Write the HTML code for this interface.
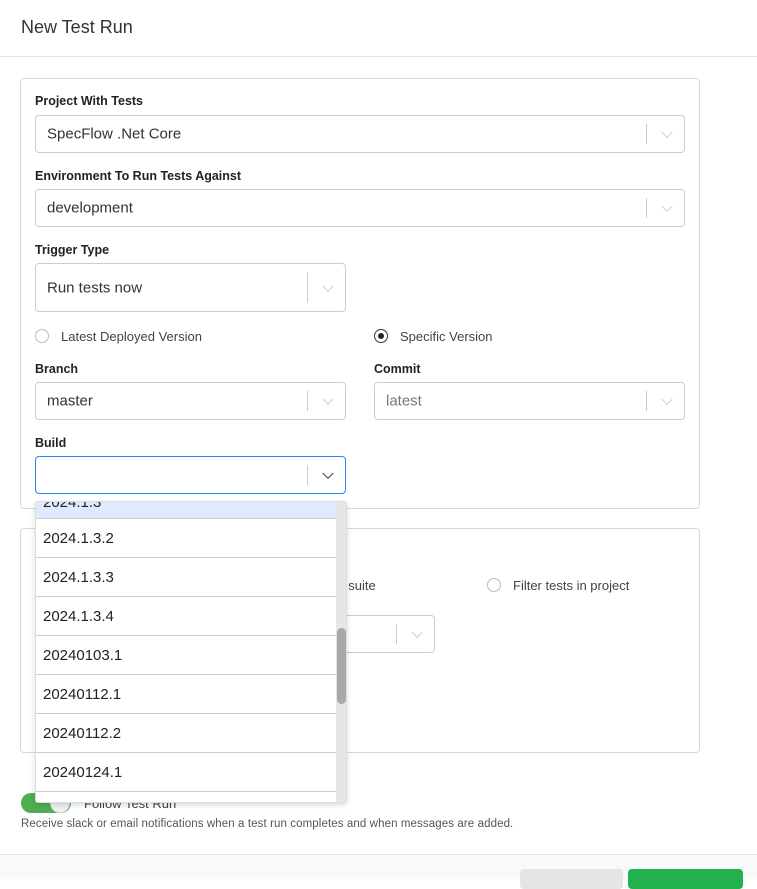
<!DOCTYPE html>
<html><head><style>
*{box-sizing:border-box;margin:0;padding:0}
body{width:757px;height:879px;overflow:hidden;background:#fff;font-family:"Liberation Sans",sans-serif;color:#333;position:relative}
.abs{position:absolute}
.hdr{left:0;top:0;width:757px;height:57px;border-bottom:1px solid #e3e3e3}
.hdr span{position:absolute;left:21px;top:17px;font-size:18px;color:#333}
.card{border:1px solid #d9d9d9;border-radius:4px;background:#fff}
.lbl{font-size:12.5px;font-weight:bold;color:#222}
.sel{border:1px solid #ccc;border-radius:4px;background:#fff;font-size:15px;color:#333}
.sel .t{position:absolute;left:11px;top:50%;transform:translateY(-50%)}
.sel .sep{position:absolute;right:37px;top:8px;bottom:8px;width:1px;background:#ccc}
.sel .ch{position:absolute;right:13px;top:50%;width:8px;height:8px;border-right:1.5px solid #ccc;border-bottom:1.5px solid #ccc;transform:translateY(-70%) rotate(45deg)}
.radio{width:14px;height:14px;border:1px solid #bbb;border-radius:50%;background:#fff}
.rl{font-size:13px;color:#444}
.dd{left:35px;top:501px;width:312px;height:302px;background:#fff;border:1px solid #ddd;border-radius:3px;box-shadow:0 2px 6px rgba(0,0,0,.15);overflow:hidden}
.it{position:absolute;left:0;width:300px;height:39px;border-bottom:1px solid #ccc;font-size:15px;color:#222;padding:11px 0 0 7px}
</style></head><body>
<div class="abs hdr"><span>New Test Run</span></div>

<div class="abs card" style="left:20px;top:78px;width:680px;height:431px"></div>
<div class="abs lbl" style="left:35px;top:94px">Project With Tests</div>
<div class="abs sel" style="left:35px;top:115px;width:650px;height:38px"><span class="t">SpecFlow .Net Core</span><i class="sep"></i><i class="ch"></i></div>
<div class="abs lbl" style="left:35px;top:169px">Environment To Run Tests Against</div>
<div class="abs sel" style="left:35px;top:189px;width:650px;height:38px"><span class="t">development</span><i class="sep"></i><i class="ch"></i></div>
<div class="abs lbl" style="left:35px;top:243px">Trigger Type</div>
<div class="abs sel" style="left:35px;top:263px;width:311px;height:49px"><span class="t">Run tests now</span><i class="sep"></i><i class="ch"></i></div>
<div class="abs radio" style="left:35px;top:329px"></div>
<div class="abs rl" style="left:61px;top:329px">Latest Deployed Version</div>
<div class="abs radio" style="left:374px;top:329px;border-color:#333"><div style="position:absolute;left:3px;top:3px;width:6px;height:6px;border-radius:50%;background:#222"></div></div>
<div class="abs rl" style="left:400px;top:329px">Specific Version</div>
<div class="abs lbl" style="left:35px;top:362px">Branch</div>
<div class="abs sel" style="left:35px;top:382px;width:311px;height:38px"><span class="t">master</span><i class="sep"></i><i class="ch"></i></div>
<div class="abs lbl" style="left:374px;top:362px">Commit</div>
<div class="abs sel" style="left:374px;top:382px;width:311px;height:38px"><span class="t" style="color:#777">latest</span><i class="sep"></i><i class="ch"></i></div>
<div class="abs lbl" style="left:35px;top:436px">Build</div>
<div class="abs sel" style="left:35px;top:456px;width:311px;height:38px;border-color:#2684ff"><i class="sep"></i><i class="ch" style="border-color:#333"></i></div>

<div class="abs card" style="left:20px;top:528px;width:680px;height:225px"></div>
<div class="abs rl" style="left:341px;top:578px">t suite</div>
<div class="abs radio" style="left:487px;top:578px"></div>
<div class="abs rl" style="left:513px;top:578px">Filter tests in project</div>
<div class="abs sel" style="left:300px;top:615px;width:135px;height:38px"><i class="sep"></i><i class="ch"></i></div>

<div class="abs" style="left:21px;top:793px;width:50px;height:20px;border-radius:10px;background:#4caf50"></div>
<div class="abs" style="left:50px;top:793px;width:20px;height:20px;border-radius:50%;background:#f1f1f1;border:1px solid #ddd"></div>
<div class="abs rl" style="left:84px;top:796px">Follow Test Run</div>
<div class="abs" style="left:21px;top:818px;font-size:11.5px;color:#555;letter-spacing:0.1px">Receive slack or email notifications when a test run completes and when messages are added.</div>

<div class="abs dd">
<div class="it" style="top:-22px;background:#deebff;height:39px;padding-top:14px">2024.1.3</div>
<div class="it" style="top:17px">2024.1.3.2</div>
<div class="it" style="top:56px">2024.1.3.3</div>
<div class="it" style="top:95px">2024.1.3.4</div>
<div class="it" style="top:134px">20240103.1</div>
<div class="it" style="top:173px">20240112.1</div>
<div class="it" style="top:212px">20240112.2</div>
<div class="it" style="top:251px">20240124.1</div>
<div class="it" style="top:290px"></div>
<div class="abs" style="left:300px;top:0;width:11px;height:302px;background:#e6e6e6"></div>
<div class="abs" style="left:301px;top:126px;width:9px;height:76px;border-radius:5px;background:#a8a8a8"></div>
</div>

<div class="abs" style="left:0;top:854px;width:757px;height:25px;background:#f8f9fb;border-top:1px solid #e3e3e3"></div>
<div class="abs" style="left:520px;top:869px;width:103px;height:20px;background:#e4e5e7;border-radius:4px"></div>
<div class="abs" style="left:628px;top:869px;width:115px;height:20px;background:#22b14c;border-radius:4px"></div>
</body></html>
